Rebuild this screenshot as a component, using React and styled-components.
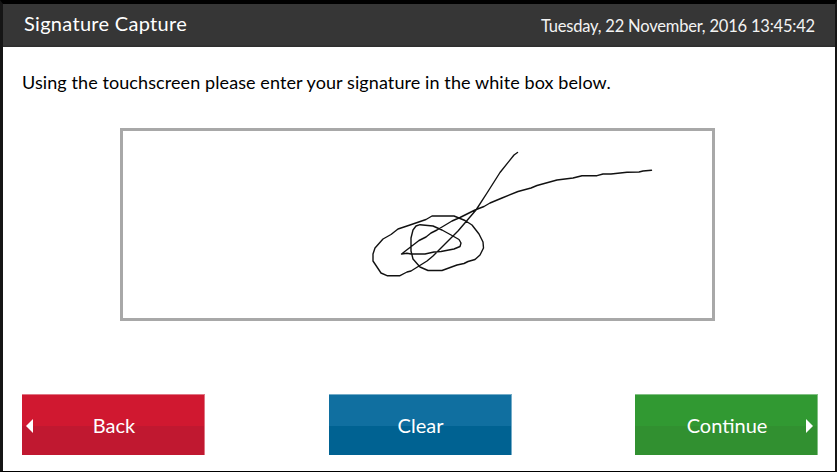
import React from 'react';
import styled, { createGlobalStyle } from 'styled-components';

const GlobalStyle = createGlobalStyle`
  * { box-sizing: border-box; }
  body { margin: 0; background: #fff; font-family: Lato, "Open Sans", sans-serif; }
`;

const Screen = styled.div`
  display: flex;
  flex-direction: column;
  width: 837px;
  height: 472px;
  overflow: hidden;
  background: #fff;
  border-style: solid;
  border-width: 4px 2px 1px 3px;
  border-color: #000 #151515 #000 #151515;
`;

const Header = styled.header`
  display: flex;
  justify-content: space-between;
  height: 43px;
  flex: none;
  padding: 0 20px 0 21px;
  background: linear-gradient(#363636 0 41px, #2e2e2e 42px);
  color: #fff;
  white-space: nowrap;
`;

const Title = styled.h1`
  margin: 0;
  font-size: 20px;
  font-weight: 400;
  line-height: 38px;
  letter-spacing: 0.3px;
`;

const Clock = styled.time`
  color: #f3f3f3;
  font-size: 16.5px;
  line-height: 44px;
  letter-spacing: -0.2px;
`;

const Body = styled.main`
  display: flex;
  flex-direction: column;
  flex: 1;
  padding: 24px 17px 16px 19px;
`;

const Instruction = styled.p`
  margin: 0;
  height: 24px;
  color: #000;
  font-size: 18px;
  line-height: 22px;
  letter-spacing: 0.09px;
  white-space: nowrap;
`;

const SignatureBox = styled.div`
  width: 595px;
  height: 193px;
  margin: 33px 0 0 98px;
  border: 3px solid #a8a8a8;
`;

const Ink = styled.svg`
  display: block;
  fill: none;
  stroke: #111;
  stroke-width: 1.4;
  stroke-linejoin: round;
  stroke-linecap: round;
`;

const Actions = styled.footer`
  display: flex;
  justify-content: space-between;
  margin-top: auto;
`;

const tones = {
  red: { top: '#d01830', bottom: '#c01830', edge: '#df7684' },
  blue: { top: '#106fa0', bottom: '#006292', edge: '#74acc8' },
  green: { top: '#319932', bottom: '#319030', edge: '#82c084' },
};

const ActionButton = styled.button`
  display: flex;
  align-items: center;
  justify-content: center;
  position: relative;
  width: 183px;
  height: 61px;
  padding: 0 0 1px 2px;
  border: 0;
  border-top: 1px solid ${({ $tone }) => tones[$tone].edge};
  border-right: 1px solid ${({ $tone }) => tones[$tone].edge};
  background: ${({ $tone }) =>
    `linear-gradient(${tones[$tone].top} 0 31px, ${tones[$tone].bottom} 31px)`};
  color: #fff;
  font: 400 20px Lato, "Open Sans", sans-serif;
`;

const Arrow = styled.svg`
  position: absolute;
  top: 24px;
  ${({ $side }) => $side}: 4px;
  fill: #fff;
`;

export default function App() {
  return (
    <>
      <GlobalStyle />
      <Screen>
        <Header>
          <Title>Signature Capture</Title>
          <Clock>Tuesday, 22 November, 2016 13:45:42</Clock>
        </Header>
        <Body>
          <Instruction>
            Using the touchscreen please enter your signature in the white box below.
          </Instruction>
          <SignatureBox>
            <Ink width="589" height="187" viewBox="123 131 589 187">
              <path d="M517.5 152.5 L514 155 L500 172.5 L487 193 L476 210 L458 231 L433 256 L427 261 L419 266 L411 271 L407 272 L400 275.7 L387 275.7 L381 273 L377 267 L373 261 L373 254 L375 248 L383 239 L391 234.5 L398 229 L410 225 L426 219.5 L432 216 L454 216 L465 220.5 L472 225 L479 234 L483 242 L483.5 248 L480 255 L475 259.5 L468 261.5 L464 263.5 L457 265 L442 270.5 L428 270.5 L420 267 L413 259 L411 251 L411 238 L413 230 L416 226 L420 224.7 L433 226 L442 230 L452 235.5 L459 239.5 L461 243 L460 246.5 L454 249 L441 251.5 L434 252 L425 254 L411 254 L407 253.2 L401.5 254 L419 240.5 L426 237 L431 233 L437 230 L452 221 L460 217.5 L475 210 L484 206.5 L490 203 L502 198 L518 191.5 L531 188 L537 185.5 L557 180 L573 178 L582 175.7 L597 175.7 L603 174 L611 174 L627 172.2 L639 172 L643 171 L651.5 170.2" />
            </Ink>
          </SignatureBox>
          <Actions>
            <ActionButton $tone="red">
              <Arrow $side="left" width="7" height="14" viewBox="0 0 7 14"><path d="M0 7 7 0v14z" /></Arrow>
              Back
            </ActionButton>
            <ActionButton $tone="blue">Clear</ActionButton>
            <ActionButton $tone="green">
              Continue
              <Arrow $side="right" width="7" height="14" viewBox="0 0 7 14"><path d="M7 7 0 0v14z" /></Arrow>
            </ActionButton>
          </Actions>
        </Body>
      </Screen>
    </>
  );
}
